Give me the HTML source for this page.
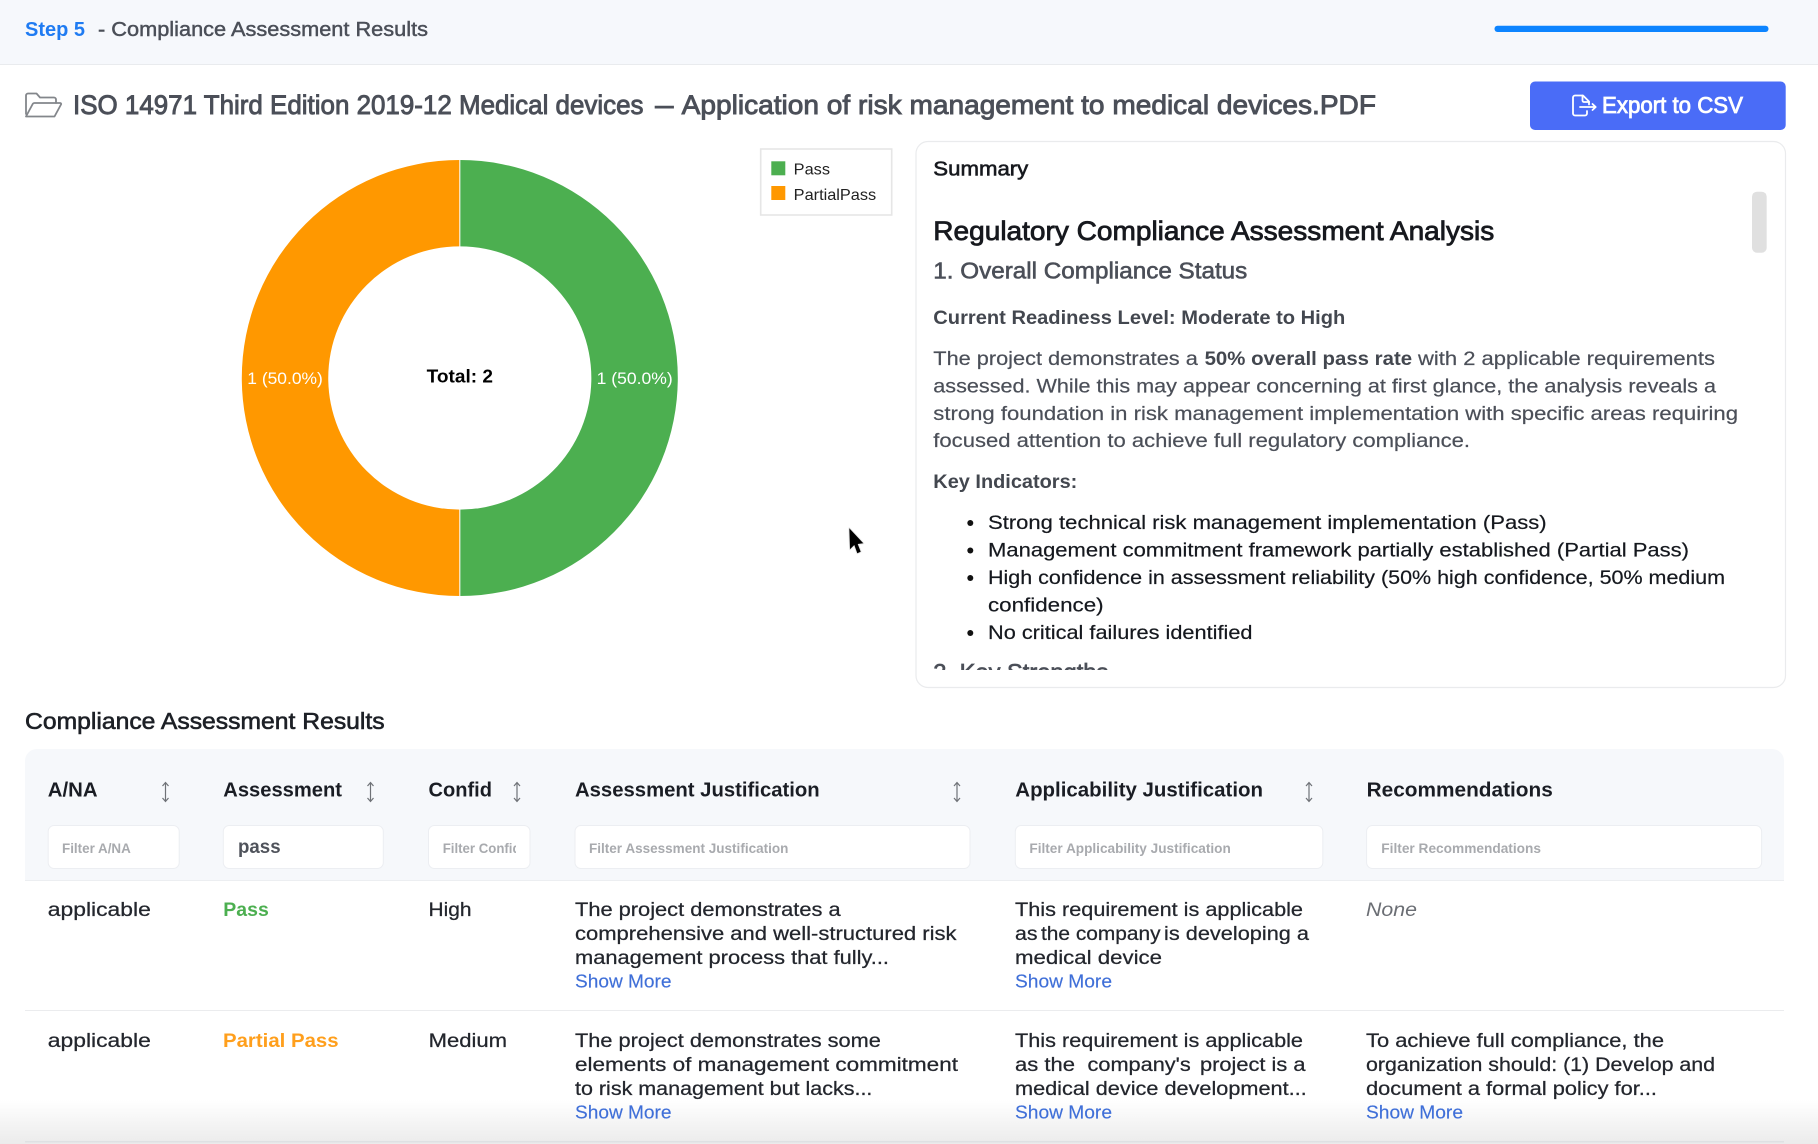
<!DOCTYPE html>
<html lang="en">
<head>
<meta charset="utf-8">
<title>Compliance Assessment Results</title>
<style>
html,body{margin:0;padding:0;width:1818px;height:1144px;overflow:hidden;background:#fff}
svg{display:block}
text{font-family:"Liberation Sans",Arial,sans-serif;white-space:pre}
.b{font-size:19.5px;fill:#4b4f58;stroke:#4b4f58;stroke-width:.2}
.k{font-size:19.5px;fill:#15181e;stroke:#15181e;stroke-width:.2}
.c{font-size:19.5px;fill:#23262d;stroke:#23262d;stroke-width:.25}
.l{font-size:18.5px;fill:#3f6fd8;stroke:#3f6fd8;stroke-width:.15}
.h{font-size:20px;font-weight:bold;fill:#1a1d24}
.p{font-size:13.5px;font-weight:bold;fill:#a8aaae}
.box{fill:#fff;stroke:#eceef2;stroke-width:1}
.s{stroke:#6f7277;stroke-width:1.2;fill:none}
.t{font-size:27px;fill:#4b4f58;stroke:#4b4f58;stroke-width:.9}
</style>
</head>
<body>
<svg width="1818" height="1144" viewBox="0 0 1818 1144" xmlns="http://www.w3.org/2000/svg">
<defs>
<clipPath id="sumclip"><rect x="920" y="142" width="860" height="528"/></clipPath>
<clipPath id="confclip"><rect x="442" y="835" width="74" height="28"/></clipPath>
<linearGradient id="fade" x1="0" y1="0" x2="0" y2="1">
<stop offset="0" stop-color="#ebebeb" stop-opacity="0"/><stop offset="1" stop-color="#ebebeb" stop-opacity="1"/>
</linearGradient>
</defs>

<!-- Bottom fade (behind text) -->
<rect x="0" y="1100" width="1818" height="44" fill="url(#fade)"/>

<!-- Top bar -->
<rect x="0" y="0" width="1818" height="64" fill="#f6f8fc"/>
<rect x="0" y="64" width="1818" height="1" fill="#e9ebee"/>
<text x="25" y="36" font-size="20" font-weight="bold" fill="#1f7bf2" textLength="60" lengthAdjust="spacingAndGlyphs">Step 5</text>
<text x="98" y="36" font-size="20" fill="#4b4f58" stroke="#4b4f58" stroke-width=".45" textLength="330" lengthAdjust="spacingAndGlyphs">- Compliance Assessment Results</text>
<rect x="1494.5" y="25.7" width="274" height="6.3" rx="3" fill="#0d84ff"/>

<!-- Title row -->
<g fill="none" stroke="#83868b" stroke-width="1.8" stroke-linejoin="round" stroke-linecap="round">
<path d="M26 114V95.5a2 2 0 0 1 2-2h8.500l3.500 4h14a2 2 0 0 1 2 2v3.500"/>
<path d="M26 116.500H54.500L61 104.500a1 1 0 0 0-1-1.500H34.500a2 2 0 0 0-1.800 1L26 116.500z"/>
</g>
<text class="t" x="73" y="114" textLength="570.500" lengthAdjust="spacingAndGlyphs">ISO 14971 Third Edition 2019-12 Medical devices</text>
<text class="t" x="655" y="114" textLength="18.600" lengthAdjust="spacingAndGlyphs">—</text>
<text class="t" x="681.700" y="114" textLength="694.300" lengthAdjust="spacingAndGlyphs">Application of risk management to medical devices.PDF</text>

<rect x="1530" y="81.500" width="255.700" height="48.500" rx="5" fill="#4a6cf7"/>
<g fill="none" stroke="#fff" stroke-width="1.800" stroke-linecap="round" stroke-linejoin="round">
<path d="M1587 111v2.500a2 2 0 0 1-2 2h-10a2 2 0 0 1-2-2v-16a2 2 0 0 1 2-2h8l6 6v3"/>
<path d="M1582.500 95.500v5a1.500 1.500 0 0 0 1.500 1.500h5"/>
<path d="M1580 107h15.500M1592.500 104l3.200 3-3.200 3"/>
</g>
<text x="1602" y="113" font-size="23" fill="#fff" stroke="#fff" stroke-width=".8" textLength="141" lengthAdjust="spacingAndGlyphs">Export to CSV</text>

<!-- Donut chart -->
<path d="M459.800 160A218 218 0 0 1 459.800 596V509.600A131.600 131.600 0 0 0 459.800 246.400z" fill="#4caf50"/>
<path d="M459.800 160A218 218 0 0 0 459.800 596V509.600A131.600 131.600 0 0 1 459.800 246.400z" fill="#ff9800"/>
<rect x="459.200" y="160" width="1.200" height="87" fill="#fff" opacity=".85"/>
<rect x="459.200" y="509" width="1.200" height="87" fill="#fff" opacity=".85"/>
<text x="247.300" y="384" font-size="17" fill="#fff" textLength="75.500" lengthAdjust="spacingAndGlyphs">1 (50.0%)</text>
<text x="596.700" y="384" font-size="17" fill="#fff" textLength="76" lengthAdjust="spacingAndGlyphs">1 (50.0%)</text>
<text x="426.700" y="382.700" font-size="18" font-weight="bold" fill="#000" textLength="66.300" lengthAdjust="spacingAndGlyphs">Total: 2</text>

<!-- Legend -->
<rect x="760.700" y="149" width="131" height="66" fill="#fff" stroke="#e6e6e6" stroke-width="1.600"/>
<rect x="771.300" y="161.300" width="14" height="14" fill="#4caf50"/>
<rect x="771.300" y="186" width="14" height="14" fill="#ff9800"/>
<text x="793.700" y="174.700" font-size="16" fill="#222" textLength="36.300" lengthAdjust="spacingAndGlyphs">Pass</text>
<text x="793.700" y="199.800" font-size="16" fill="#222" textLength="82.500" lengthAdjust="spacingAndGlyphs">PartialPass</text>

<!-- Cursor -->
<path d="M849.300 528.300L850 549.300L854.300 545L857.300 553.300L860.700 551.700L857.700 544L863.300 543.300Z" fill="#000" stroke="#e8e8e8" stroke-width="1.800" stroke-linejoin="round" paint-order="stroke"/>

<!-- Summary card -->
<rect x="916" y="141.500" width="869.500" height="546" rx="12" fill="#fff" stroke="#eaebed" stroke-width="1.200"/>
<text x="933.300" y="175.500" font-size="20.500" fill="#17191e" stroke="#17191e" stroke-width=".6" textLength="95" lengthAdjust="spacingAndGlyphs">Summary</text>
<g clip-path="url(#sumclip)">
<text x="933.300" y="240" font-size="27" fill="#17191e" stroke="#17191e" stroke-width=".8" textLength="561" lengthAdjust="spacingAndGlyphs">Regulatory Compliance Assessment Analysis</text>
<text x="933.300" y="278.300" font-size="23.500" fill="#4b4f58" stroke="#4b4f58" stroke-width=".6" textLength="314" lengthAdjust="spacingAndGlyphs">1. Overall Compliance Status</text>
<text x="933.300" y="324" font-size="19.500" font-weight="bold" fill="#43474f" textLength="412" lengthAdjust="spacingAndGlyphs">Current Readiness Level: Moderate to High</text>
<text class="b" x="933.300" y="365" textLength="264.500" lengthAdjust="spacingAndGlyphs">The project demonstrates a</text>
<text x="1204.600" y="365" font-size="19.500" font-weight="bold" fill="#43474f" textLength="207.500" lengthAdjust="spacingAndGlyphs">50% overall pass rate</text>
<text class="b" x="1418" y="365" textLength="297" lengthAdjust="spacingAndGlyphs">with 2 applicable requirements</text>
<text class="b" x="933.300" y="392.300" textLength="782.700" lengthAdjust="spacingAndGlyphs">assessed. While this may appear concerning at first glance, the analysis reveals a</text>
<text class="b" x="933.300" y="420" textLength="804.700" lengthAdjust="spacingAndGlyphs">strong foundation in risk management implementation with specific areas requiring</text>
<text class="b" x="933.300" y="447" textLength="536.700" lengthAdjust="spacingAndGlyphs">focused attention to achieve full regulatory compliance.</text>
<text x="933.300" y="488" font-size="19.500" font-weight="bold" fill="#43474f" textLength="144" lengthAdjust="spacingAndGlyphs">Key Indicators:</text>
<circle cx="970.300" cy="523" r="3" fill="#111"/>
<text class="k" x="988" y="529.200" textLength="558.600" lengthAdjust="spacingAndGlyphs">Strong technical risk management implementation (Pass)</text>
<circle cx="970.300" cy="550.500" r="3" fill="#111"/>
<text class="k" x="988" y="556.700" textLength="701" lengthAdjust="spacingAndGlyphs">Management commitment framework partially established (Partial Pass)</text>
<circle cx="970.300" cy="578" r="3" fill="#111"/>
<text class="k" x="988" y="584" textLength="737" lengthAdjust="spacingAndGlyphs">High confidence in assessment reliability (50% high confidence, 50% medium</text>
<text class="k" x="988" y="611.700" textLength="115.600" lengthAdjust="spacingAndGlyphs">confidence)</text>
<circle cx="970.300" cy="633" r="3" fill="#111"/>
<text class="k" x="988" y="639" textLength="264.500" lengthAdjust="spacingAndGlyphs">No critical failures identified</text>
<text x="933.300" y="680" font-size="23.500" fill="#4b4f58" stroke="#4b4f58" stroke-width=".7" textLength="175" lengthAdjust="spacingAndGlyphs">2. Key Strengths</text>
</g>
<rect x="1752" y="191.700" width="14.700" height="61" rx="5" fill="#e0e0e0"/>

<!-- Table heading -->
<text x="25" y="729" font-size="23" fill="#1d2026" stroke="#1d2026" stroke-width=".6" textLength="359.600" lengthAdjust="spacingAndGlyphs">Compliance Assessment Results</text>

<!-- Table header -->
<path d="M25 761a12 12 0 0 1 12-12H1772a12 12 0 0 1 12 12V880.700H25z" fill="#f6f8fb"/>
<rect x="25" y="880" width="1759" height="1" fill="#eceef1"/>
<text class="h" x="47.800" y="796.700" textLength="49.800" lengthAdjust="spacingAndGlyphs">A/NA</text>
<text class="h" x="223.300" y="796.700" textLength="118.700" lengthAdjust="spacingAndGlyphs">Assessment</text>
<text class="h" x="428.500" y="796.700" textLength="63.500" lengthAdjust="spacingAndGlyphs">Confid</text>
<text class="h" x="575" y="796.700" textLength="244.700" lengthAdjust="spacingAndGlyphs">Assessment Justification</text>
<text class="h" x="1015.300" y="796.700" textLength="247.700" lengthAdjust="spacingAndGlyphs">Applicability Justification</text>
<text class="h" x="1366.600" y="796.700" textLength="186.200" lengthAdjust="spacingAndGlyphs">Recommendations</text>

<g class="s">
<path d="M165.500 783V801M162.500 786l3-3.500 3 3.500M162.500 798l3 3.500 3-3.500"/>
<path d="M370.500 783V801M367.500 786l3-3.500 3 3.500M367.500 798l3 3.500 3-3.500"/>
<path d="M517 783V801M514 786l3-3.500 3 3.500M514 798l3 3.500 3-3.500"/>
<path d="M957 783V801M954 786l3-3.500 3 3.500M954 798l3 3.500 3-3.500"/>
<path d="M1309 783V801M1306 786l3-3.500 3 3.500M1306 798l3 3.500 3-3.500"/>
</g>

<!-- Filters -->
<rect class="box" x="48.200" y="825.500" width="131" height="43" rx="6"/>
<rect class="box" x="223.300" y="825.500" width="160" height="43" rx="6"/>
<rect class="box" x="428.500" y="825.500" width="101.500" height="43" rx="6"/>
<rect class="box" x="575" y="825.500" width="395" height="43" rx="6"/>
<rect class="box" x="1015.300" y="825.500" width="307.500" height="43" rx="6"/>
<rect class="box" x="1366.600" y="825.500" width="395" height="43" rx="6"/>
<text class="p" x="62" y="853" textLength="68.800" lengthAdjust="spacingAndGlyphs">Filter A/NA</text>
<text x="238" y="853" font-size="19" font-weight="bold" fill="#4f535b" textLength="42.600" lengthAdjust="spacingAndGlyphs">pass</text>
<g clip-path="url(#confclip)"><text class="p" x="442.700" y="853" textLength="108" lengthAdjust="spacingAndGlyphs">Filter Confidence</text></g>
<text class="p" x="589" y="853" textLength="199.400" lengthAdjust="spacingAndGlyphs">Filter Assessment Justification</text>
<text class="p" x="1029.400" y="853" textLength="201.400" lengthAdjust="spacingAndGlyphs">Filter Applicability Justification</text>
<text class="p" x="1381.300" y="853" textLength="159.700" lengthAdjust="spacingAndGlyphs">Filter Recommendations</text>

<!-- Row 1 -->
<text class="c" x="47.800" y="916" textLength="103" lengthAdjust="spacingAndGlyphs">applicable</text>
<text x="223.300" y="916" font-size="19.500" font-weight="bold" fill="#4caf50" textLength="45.500" lengthAdjust="spacingAndGlyphs">Pass</text>
<text class="c" x="428.500" y="916" textLength="43" lengthAdjust="spacingAndGlyphs">High</text>
<text class="c" x="575" y="916" textLength="265.600" lengthAdjust="spacingAndGlyphs">The project demonstrates a</text>
<text class="c" x="575" y="940" textLength="381.500" lengthAdjust="spacingAndGlyphs">comprehensive and well-structured risk</text>
<text class="c" x="575" y="964" textLength="314" lengthAdjust="spacingAndGlyphs">management process that fully...</text>
<text class="l" x="575" y="987.500" textLength="96.500" lengthAdjust="spacingAndGlyphs">Show More</text>
<text class="c" x="1015" y="916" textLength="288" lengthAdjust="spacingAndGlyphs">This requirement is applicable</text>
<text class="c" x="1015" y="940" textLength="22.500" lengthAdjust="spacingAndGlyphs">as</text>
<text class="c" x="1041" y="940" textLength="119.600" lengthAdjust="spacingAndGlyphs">the company</text>
<text class="c" x="1164" y="940" textLength="145" lengthAdjust="spacingAndGlyphs">is developing a</text>
<text class="c" x="1015" y="964" textLength="147" lengthAdjust="spacingAndGlyphs">medical device</text>
<text class="l" x="1015" y="987.500" textLength="97" lengthAdjust="spacingAndGlyphs">Show More</text>
<text x="1366" y="916" font-size="19.500" font-style="italic" fill="#6b6e74" textLength="51" lengthAdjust="spacingAndGlyphs">None</text>
<rect x="25" y="1010" width="1759" height="1" fill="#ebecee"/>

<!-- Row 2 -->
<text class="c" x="47.800" y="1047" textLength="103" lengthAdjust="spacingAndGlyphs">applicable</text>
<text x="223" y="1047" font-size="19.500" font-weight="bold" fill="#ff9f1c" textLength="115.600" lengthAdjust="spacingAndGlyphs">Partial Pass</text>
<text class="c" x="428.600" y="1047" textLength="78.400" lengthAdjust="spacingAndGlyphs">Medium</text>
<text class="c" x="575" y="1047" textLength="305.800" lengthAdjust="spacingAndGlyphs">The project demonstrates some</text>
<text class="c" x="575" y="1071" textLength="383" lengthAdjust="spacingAndGlyphs">elements of management commitment</text>
<text class="c" x="575" y="1095" textLength="297.400" lengthAdjust="spacingAndGlyphs">to risk management but lacks...</text>
<text class="l" x="575" y="1118.500" textLength="96.500" lengthAdjust="spacingAndGlyphs">Show More</text>
<text class="c" x="1015" y="1047" textLength="288" lengthAdjust="spacingAndGlyphs">This requirement is applicable</text>
<text class="c" x="1015" y="1071" textLength="60" lengthAdjust="spacingAndGlyphs">as the</text>
<text class="c" x="1087.500" y="1071" textLength="103.200" lengthAdjust="spacingAndGlyphs">company's</text>
<text class="c" x="1200" y="1071" textLength="105.500" lengthAdjust="spacingAndGlyphs">project is a</text>
<text class="c" x="1015" y="1095" textLength="291.700" lengthAdjust="spacingAndGlyphs">medical device development...</text>
<text class="l" x="1015" y="1118.500" textLength="97" lengthAdjust="spacingAndGlyphs">Show More</text>
<text class="c" x="1366" y="1047" textLength="298" lengthAdjust="spacingAndGlyphs">To achieve full compliance, the</text>
<text class="c" x="1366" y="1071" textLength="349" lengthAdjust="spacingAndGlyphs">organization should: (1) Develop and</text>
<text class="c" x="1366" y="1095" textLength="291" lengthAdjust="spacingAndGlyphs">document a formal policy for...</text>
<text class="l" x="1366" y="1118.500" textLength="97" lengthAdjust="spacingAndGlyphs">Show More</text>

<rect x="25" y="1141" width="1759" height="1.500" fill="#dfe1e3"/>
</svg>
</body>
</html>
